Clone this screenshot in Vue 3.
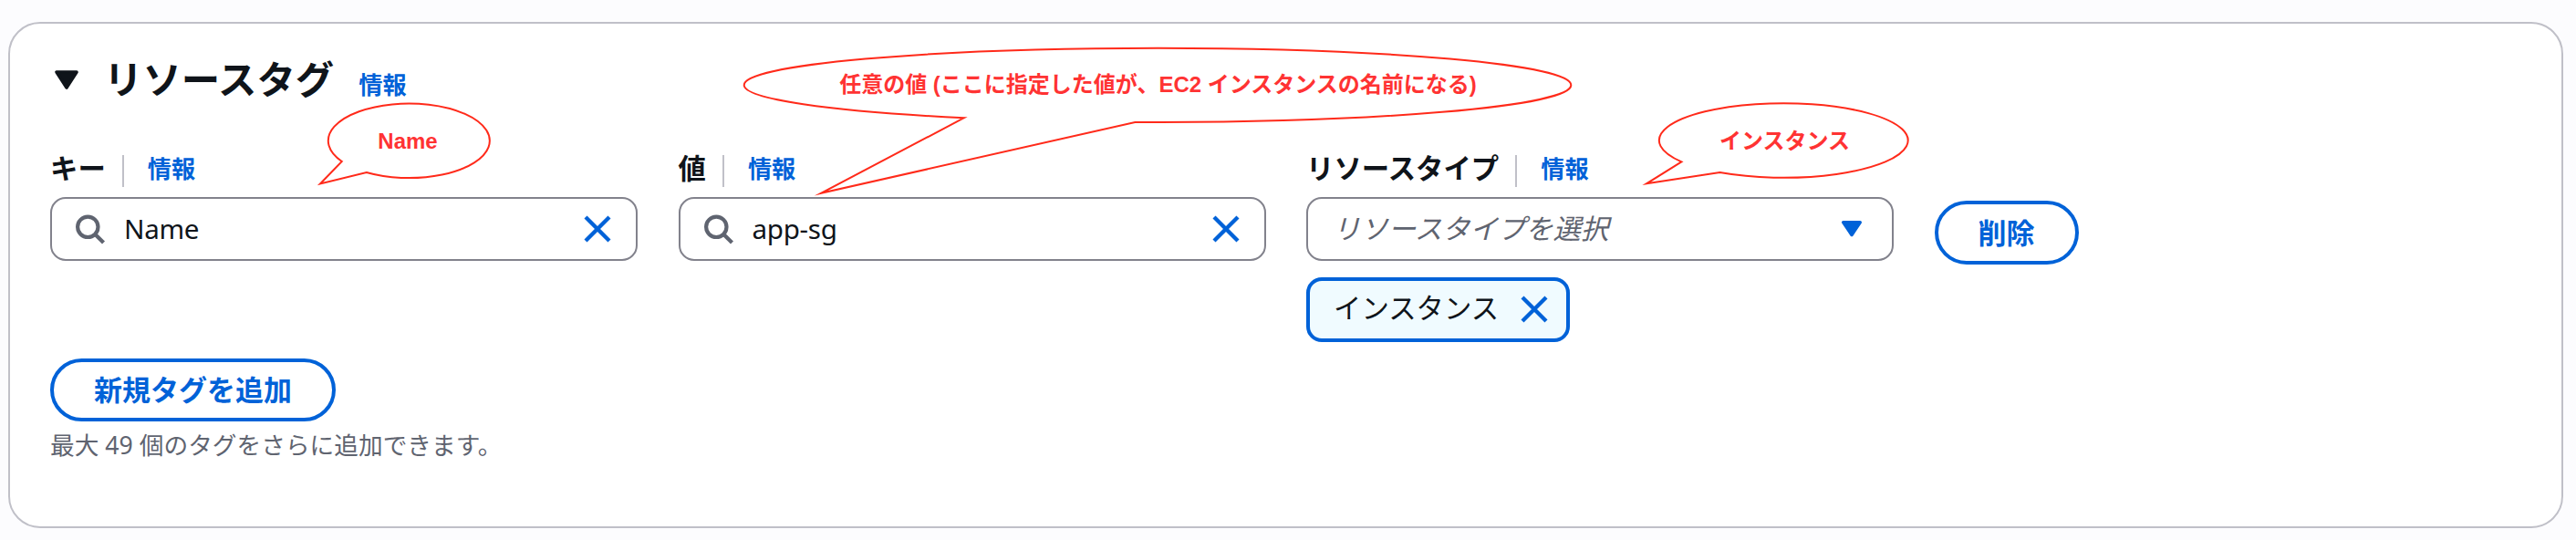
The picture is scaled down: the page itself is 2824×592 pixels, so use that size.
<script setup>
const fields = [
  { label: 'キー', value: 'Name', kind: 'search' },
  { label: '値', value: 'app-sg', kind: 'search' },
  { label: 'リソースタイプ', value: 'リソースタイプを選択', kind: 'select' },
]
</script>

<template>
  <main class="page">
    <section class="card">
      <header class="heading">
        <svg class="toggle" width="28" height="24" viewBox="0 0 28 24">
          <path d="M3 3H25L14 20Z" fill="#0f141a" stroke="#0f141a" stroke-width="3.6" stroke-linejoin="round" />
        </svg>
        <h2>リソースタグ</h2>
        <a class="info">情報</a>
      </header>

      <div class="row">
        <div v-for="f in fields" :key="f.label" class="field">
          <div class="label">
            <span class="name">{{ f.label }}</span>
            <span class="sep"></span>
            <a class="info">情報</a>
          </div>
          <div class="control" :class="f.kind">
            <svg v-if="f.kind === 'search'" class="lens" width="34" height="34" viewBox="0 0 34 34">
              <circle cx="14.3" cy="14.8" r="11.2" />
              <path d="M22.4 22.9L31.5 32" />
            </svg>
            <span class="value">{{ f.value }}</span>
            <svg v-if="f.kind === 'search'" class="cross" width="30" height="30" viewBox="0 0 30 30">
              <path d="M2 2L28 28M28 2L2 28" />
            </svg>
            <svg v-else class="caret" width="24" height="20" viewBox="0 0 24 20">
              <path d="M2.8 2.8H21.2L12 16.4Z" />
            </svg>
          </div>
          <div v-if="f.kind === 'select'" class="token">
            <span>インスタンス</span>
            <svg class="cross" width="30" height="30" viewBox="0 0 30 30">
              <path d="M2 2L28 28M28 2L2 28" />
            </svg>
          </div>
        </div>
        <button class="btn remove">削除</button>
      </div>

      <button class="btn add">新規タグを追加</button>
      <p class="hint">最大 49 個のタグをさらに追加できます。</p>
    </section>

    <svg class="notes" width="2824" height="592" viewBox="0 0 2824 592">
      <path d="M374.8 177A88.5 40.8 0 1 1 401.8 189L351 201.5Z" />
      <path d="M1057 129.2A453.3 40.6 0 0 1 815.7 93.3A453.3 40.6 0 0 1 1722.3 93.3A453.3 40.6 0 0 1 1244.3 133.9L900 211.8Z" />
      <path d="M1843.4 177.3A136.4 40.8 0 1 1 1885.4 189L1805 201.3Z" />
      <text x="447" y="163">Name</text>
      <text x="1269.5" y="101">任意の値 (ここに指定した値が、EC2 インスタンスの名前になる)</text>
      <text x="1956.5" y="163">インスタンス</text>
    </svg>
  </main>
</template>

<style>
body {
  margin: 0;
  background: #fcfcfe;
}
</style>

<style scoped>
.page {
  position: relative;
  box-sizing: border-box;
  width: 2824px;
  height: 592px;
  padding: 24px 14px 13px 9px;
  overflow: hidden;
  background: #fcfcfe;
  color: #0f141a;
  font-family: "Noto Sans", "Noto Sans CJK JP", sans-serif;
  font-size: 30.4px;
}
.card {
  box-sizing: border-box;
  height: 555px;
  padding: 0 44px;
  border: 2px solid #c0c0c8;
  border-radius: 35px;
  background: #fff;
}
.heading {
  display: flex;
  height: 143px;
}
.toggle {
  margin: 50px 0 0 4px;
}
h2 {
  margin: 31px 0 0 27px;
  font-size: 42.4px;
  line-height: 60px;
  font-weight: 700;
}
.info {
  color: #0062d8;
  font-size: 26.2px;
  line-height: 34px;
  font-weight: 700;
  font-family: "Noto Sans CJK JP", sans-serif;
}
.heading .info {
  margin: 49px 0 0 27px;
}
.row {
  display: grid;
  grid-template-columns: 644px 644px 644px auto;
  column-gap: 44.5px;
  justify-content: start;
  height: 224px;
}
.label {
  display: flex;
  align-items: flex-start;
  height: 47px;
}
.name {
  font-family: "Noto Sans CJK JP", sans-serif;
  font-weight: 700;
  font-size: 30.4px;
  line-height: 28px;
}
.sep {
  width: 2px;
  height: 35px;
  margin: 1px 26px 0 18px;
  background: #c0c0c8;
}
.label .info {
  line-height: 31px;
}
.control {
  box-sizing: border-box;
  display: flex;
  align-items: center;
  height: 70px;
  padding: 0 27px 0 25px;
  border: 2px solid #82828c;
  border-radius: 17px;
}
.value {
  flex: 1;
  margin-left: 20px;
  line-height: 40px;
}
.search .value {
  font-size: 29.6px;
  letter-spacing: -0.3px;
}
.select {
  padding-right: 32.5px;
}
.select .value {
  margin-left: 2px;
  color: #5f6470;
  font-style: italic;
}
.lens {
  fill: none;
  stroke: #5f6470;
  stroke-width: 4.2;
}
.cross {
  fill: none;
  stroke: #0062d8;
  stroke-width: 4.3;
}
.caret {
  fill: #0062d8;
  stroke: #0062d8;
  stroke-width: 3.6;
  stroke-linejoin: round;
}
.token {
  box-sizing: border-box;
  display: flex;
  align-items: center;
  justify-content: space-between;
  width: 289px;
  height: 71px;
  margin-top: 18px;
  padding: 0 20px 2px 26px;
  border: 4px solid #0062d8;
  border-radius: 17px;
  background: #f0fbff;
}
.token span {
  padding-bottom: 6px;
}
.btn {
  display: block;
  box-sizing: border-box;
  margin: 0;
  padding: 0 0 3px;
  border: 4px solid #0062d8;
  border-radius: 35px;
  background: #fff;
  color: #0062d8;
  font: 700 31px/56px "Noto Sans CJK JP", sans-serif;
}
.remove {
  width: 158px;
  height: 70px;
  margin-top: 51px;
}
.add {
  width: 313px;
  height: 69px;
}
.hint {
  margin: 8px 0 0;
  color: #5f6470;
  font-size: 26.7px;
  line-height: 36px;
}
.notes {
  position: absolute;
  left: 0;
  top: 0;
}
.notes path {
  fill: none;
  stroke: #ff2a1a;
  stroke-width: 2;
  stroke-miterlimit: 12;
}
.notes text {
  fill: #ff3333;
  font: 700 24px "Liberation Sans", "Noto Sans CJK JP", sans-serif;
  text-anchor: middle;
}
</style>
